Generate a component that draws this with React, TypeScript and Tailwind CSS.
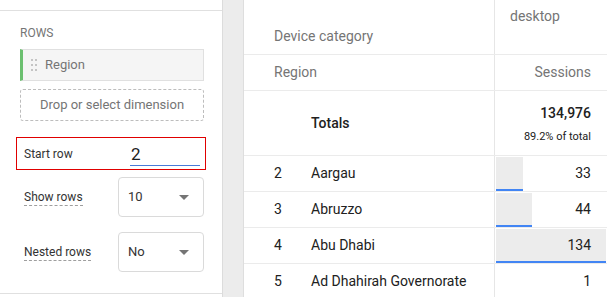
import React from 'react'

interface DataRow {
  idx: number
  region: string
  sessions: number
}

const rows: DataRow[] = [
  { idx: 2, region: 'Aargau', sessions: 33 },
  { idx: 3, region: 'Abruzzo', sessions: 44 },
  { idx: 4, region: 'Abu Dhabi', sessions: 134 },
  { idx: 5, region: 'Ad Dhahirah Governorate', sessions: 1 },
]

const maxSessions = 134

function DragHandle() {
  return (
    <div className="grid grid-cols-2 gap-x-[2px] gap-y-[3px]">
      {[0, 1, 2, 3, 4, 5].map(i => (
        <div key={i} className="w-[2px] h-[2px] bg-[#c4c4c4]" />
      ))}
    </div>
  )
}

function Select({ value }: { value: string }) {
  return (
    <div className="w-[86px] h-[40px] border border-[#dadada] rounded-[4px] flex items-center justify-between pl-[9px] pr-[14px]">
      <span className="text-[13px] text-[#333]">{value}</span>
      <svg width="10" height="5" viewBox="0 0 10 5">
        <path d="M0 0 L10 0 L5 5 Z" fill="#757575" />
      </svg>
    </div>
  )
}

function SidePanel() {
  return (
    <div className="w-[223px] shrink-0 border-r border-[#dcdcdc] bg-white flex flex-col">
      <div className="h-[11px] shrink-0 border-b border-[#e0e0e0]" />
      <div className="px-[20px] pt-[16px]">
        <div className="text-[12px] text-[#757575] uppercase leading-none">Rows</div>
        <div className="mt-[10px] h-[32px] w-[184px] bg-[#f5f5f5] border border-[#e0e0e0] border-l-[3px] border-l-[#6cc070] flex items-center pl-[8px] gap-[8px]">
          <DragHandle />
          <span className="text-[13px] text-[#757575]">Region</span>
        </div>
        <div className="mt-[8px] h-[32px] w-[184px] border border-dashed border-[#bdbdbd] rounded-[3px] flex items-center justify-center">
          <span className="text-[13px] text-[#757575]">Drop or select dimension</span>
        </div>
      </div>
      <div className="ml-[16px] mt-[16px] w-[190px] h-[33px] shrink-0 border border-[#e00000] flex items-center pl-[7px]">
        <span className="text-[12px] text-[#333] w-[106px]">Start row</span>
        <div className="w-[70px] h-[25px] border-b border-[#4a7bd8] flex items-end pb-[2px]">
          <span className="text-[17px] text-[#212121] leading-none pl-[1px]">2</span>
        </div>
      </div>
      <div className="pl-[24px] pr-[18px] mt-[7px] flex items-center justify-between">
        <span className="text-[12px] text-[#333] border-b border-dashed border-[#9e9e9e] leading-[16px]">Show rows</span>
        <Select value="10" />
      </div>
      <div className="pl-[24px] pr-[18px] mt-[15px] flex items-center justify-between">
        <span className="text-[12px] text-[#333] border-b border-dashed border-[#9e9e9e] leading-[16px]">Nested rows</span>
        <Select value="No" />
      </div>
      <div className="mt-[21px] border-b border-[#e0e0e0]" />
    </div>
  )
}

export default function App() {
  return (
    <div className="w-[607px] h-[297px] overflow-hidden flex bg-white" style={{ fontFamily: 'Roboto, sans-serif' }}>
      <SidePanel />
      <div className="w-[21px] shrink-0 bg-[#ececec] border-r border-[#dedede]" />
      <div className="flex-1 flex flex-col text-[14px]">
        {/* header: device category */}
        <div className="flex h-[55px] shrink-0 border-b border-[#ebebeb]">
          <div className="w-[251px] border-r border-[#e6e6e6] flex items-end pl-[30px] pb-[7px] text-[#757575]">
            Device category
          </div>
          <div className="flex-1 pl-[15px] pt-[6px] text-[#757575]">desktop</div>
        </div>
        {/* header: region / sessions */}
        <div className="flex h-[36px] shrink-0 border-b border-[#ebebeb]">
          <div className="w-[251px] border-r border-[#e6e6e6] flex items-center pl-[30px] text-[#757575]">
            Region
          </div>
          <div className="flex-1 flex items-center justify-end pr-[16px] text-[#757575]">Sessions</div>
        </div>
        {/* totals */}
        <div className="flex h-[65px] shrink-0 border-b border-[#ebebeb]">
          <div className="w-[251px] border-r border-[#e6e6e6] flex items-center pl-[67px] font-medium text-[#212121]">
            Totals
          </div>
          <div className="flex-1 flex flex-col items-end pt-[15px] pr-[16px] gap-[11px]">
            <span className="font-medium text-[#212121] leading-none">134,976</span>
            <span className="text-[11px] text-[#212121] leading-none">89.2% of total</span>
          </div>
        </div>
        {rows.map(r => (
          <div key={r.idx} className="flex h-[36px] shrink-0 border-b border-[#ebebeb]">
            <div className="w-[251px] border-r border-[#e6e6e6] flex items-center text-[#212121]">
              <span className="w-[67px] pl-[30px]">{r.idx}</span>
              <span>{r.region}</span>
            </div>
            <div className="flex-1 relative flex items-center justify-end pr-[16px] text-[#212121]">
              {r.sessions > 1 && (
                <div
                  className="absolute left-[1px] top-[1px] bottom-[0px] bg-[#ececec] border-b-2 border-[#4285f4]"
                  style={{ width: `${(r.sessions / maxSessions) * 110}px` }}
                />
              )}
              <span className="relative">{r.sessions}</span>
            </div>
          </div>
        ))}
      </div>
    </div>
  )
}
